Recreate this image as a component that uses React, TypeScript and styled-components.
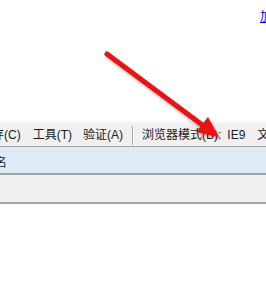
import styled, { createGlobalStyle } from 'styled-components';

const GlobalStyle = createGlobalStyle`
  html, body {
    margin: 0;
    padding: 0;
    background: #ffffff;
  }
  body {
    font-family: "Liberation Sans", "Noto Sans CJK SC", sans-serif;
  }
`;

const Page = styled.div`
  position: relative;
  width: 266px;
  height: 295px;
  overflow: hidden;
  background: #ffffff;
`;

const TopArea = styled.div`
  height: 121px;
  display: flex;
  justify-content: flex-end;
  padding-top: 9px;
  box-sizing: border-box;
`;

const PageLink = styled.a`
  color: #0000ff;
  font-size: 12px;
  line-height: 16px;
  text-decoration: underline;
  margin-right: -6px;
  white-space: nowrap;
`;

const Toolbar = styled.div`
  height: 26px;
  box-sizing: border-box;
  padding-top: 3px;
  display: flex;
  align-items: center;
  background: linear-gradient(#fafafa 0, #f0f0f0 4px, #f0f0f0 100%);
  border-bottom: 1px solid #a0a0a0;
  overflow: hidden;
  white-space: nowrap;
`;

const MenuRow = styled.div`
  display: flex;
  align-items: center;
  gap: 12px;
  margin-left: -20px;
  font-size: 12px;
  color: #1a1a1a;
`;

const MenuItem = styled.span<{ $pull?: number }>`
  line-height: 16px;
  margin-left: ${(p) => (p.$pull ? -p.$pull : 0)}px;
`;

const Separator = styled.span`
  width: 1px;
  height: 19px;
  background: #a8a8a8;
  border-right: 1px solid #ffffff;
  margin: 0 -3px;
`;

const Band = styled.div<{ $bg: string; $h: number }>`
  height: ${(p) => p.$h}px;
  background: ${(p) => p.$bg};
  border-bottom: 2px solid #a5a5a5;
  display: flex;
  align-items: center;
  overflow: hidden;
  font-size: 12px;
  color: #1a1a1a;
  white-space: nowrap;
`;

const BandText = styled.span`
  margin-left: -5px;
  padding-top: 2px;
`;

const ArrowLayer = styled.svg`
  position: absolute;
  left: 0;
  top: 0;
  pointer-events: none;
  filter: drop-shadow(1px 2px 1.5px rgba(0, 0, 0, 0.3));
`;

const items = ['缓存(C)', '工具(T)'];

export default function App() {
  return (
    <Page>
      <GlobalStyle />
      <TopArea>
        <PageLink href="#">加</PageLink>
      </TopArea>
      <Toolbar>
        <MenuRow>
          {items.map((t) => (
            <MenuItem key={t}>{t}</MenuItem>
          ))}
          <MenuItem $pull={1}>验证(A)</MenuItem>
          <Separator />
          <MenuItem $pull={1}>浏览器模式(B):</MenuItem>
          <MenuItem $pull={6}>IE9</MenuItem>
          <MenuItem>文档模式(M): IE9标准</MenuItem>
        </MenuRow>
      </Toolbar>
      <Band $bg="#dfeaf7" $h={26}>
        <BandText>名</BandText>
      </Band>
      <Band $bg="#f0f0f0" $h={27} />
      <ArrowLayer width="266" height="295" viewBox="0 0 266 295">
        <line x1="107" y1="54" x2="205" y2="127" stroke="#ee1111" strokeWidth="5" strokeLinecap="round" />
        <polygon points="219,137 196,132 208,117" fill="#ee1111" />
      </ArrowLayer>
    </Page>
  );
}
